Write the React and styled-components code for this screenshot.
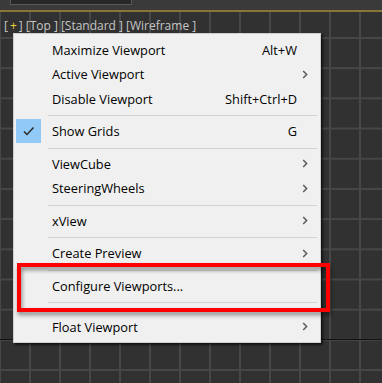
import React from 'react';
import styled, { createGlobalStyle } from 'styled-components';

const Global = createGlobalStyle`
  html, body { margin: 0; padding: 0; width: 382px; height: 383px; overflow: hidden; background: #313131; }
  #root { width: 382px; height: 383px; }
`;

const Screen = styled.div`
  position: relative;
  width: 382px;
  height: 383px;
  display: flex;
  flex-direction: column;
  overflow: hidden;
  background: #313131;
  font-family: "Open Sans", "Noto Sans", sans-serif;
`;

const TopStrip = styled.div`
  height: 10px;
  background: #3a3a3a;
  display: flex;
  align-items: flex-start;
`;

const Field = styled.div`
  margin-left: 10px;
  width: 120px;
  height: 4px;
  background: #272727;
  border: 1px solid #585858;
  border-top: none;
`;

const AccentLine = styled.div`
  height: 2px;
  background: #8a7634;
`;

const Viewport = styled.div`
  flex: 1;
  position: relative;
  padding: 6px 0 0 4px;
  background-color: #313131;
  background-image:
    linear-gradient(#111111, #111111),
    linear-gradient(to right, #474747 2px, transparent 2px),
    linear-gradient(to bottom, #474747 2px, transparent 2px);
  background-size: 100% 1px, 30px 100%, 100% 30.2px;
  background-position: 0 327px, 29px 0, 0 25px;
  background-repeat: no-repeat, repeat, repeat;
`;

const ViewLabel = styled.div`
  display: flex;
  gap: 3px;
  font-size: 12px;
  line-height: 16px;
  color: #c6c6c6;
  white-space: pre;
`;

const Plus = styled.span`
  color: #e8d23a;
  padding: 0 2px;
`;

const Menu = styled.div`
  position: absolute;
  left: 13px;
  top: 33px;
  width: 308px;
  box-sizing: border-box;
  background: #f0f0f0;
  border: 1px solid #cfcfcf;
  box-shadow: 2px 2px 2px rgba(0, 0, 0, 0.6);
  padding: 3.5px 0 3px;
  font-size: 12.8px;
  color: #000;
`;

const Item = styled.div`
  display: grid;
  grid-template-columns: 25px 1fr auto 23px;
  align-items: center;
  height: 24.5px;
  padding-left: 2px;
`;

const IconCell = styled.div`
  width: 25px;
  height: 24px;
  display: flex;
  align-items: center;
  justify-content: center;
  background: ${(p) => (p.$checked ? '#91c9f7' : 'transparent')};
`;

const Label = styled.span`
  padding-left: 11px;
  white-space: nowrap;
`;

const Shortcut = styled.span`
  white-space: nowrap;
`;

const ArrowCell = styled.div`
  display: flex;
  align-items: center;
  padding-left: 5px;
`;

const Separator = styled.div`
  height: ${(p) => (p.$tall ? '16.7px' : '8px')};
  margin: 0 3px 0 34px;
  display: flex;
  flex-direction: column;
  &::before {
    content: '';
    margin-top: 4px;
    height: 1px;
    background: #d4d4d4;
  }
`;

const Callout = styled.div`
  position: absolute;
  left: 17px;
  top: 263px;
  width: 313px;
  height: 49px;
  box-sizing: border-box;
  border: 4px solid #ff0000;
  filter: drop-shadow(1px 3px 2px rgba(0, 0, 0, 0.45));
`;

const Check = () => (
  <svg width="25" height="24" viewBox="0 0 25 24">
    <polyline points="8,12.5 11,15.5 17.5,8.5" fill="none" stroke="#2b2b2b" strokeWidth="1.5" />
  </svg>
);

const Chevron = () => (
  <svg width="6" height="9" viewBox="0 0 6 9">
    <polyline points="1.2,1 4.6,4.5 1.2,8" fill="none" stroke="#5e5e5e" strokeWidth="1.6" />
  </svg>
);

const items = [
  { label: 'Maximize Viewport', shortcut: 'Alt+W' },
  { label: 'Active Viewport', sub: true },
  { label: 'Disable Viewport', shortcut: 'Shift+Ctrl+D' },
  { sep: true },
  { label: 'Show Grids', shortcut: 'G', checked: true },
  { sep: true },
  { label: 'ViewCube', sub: true },
  { label: 'SteeringWheels', sub: true },
  { sep: true },
  { label: 'xView', sub: true },
  { sep: true },
  { label: 'Create Preview', sub: true },
  { sep: true },
  { label: 'Configure Viewports...' },
  { sep: true, tall: true },
  { label: 'Float Viewport', sub: true },
];

export default function App() {
  return (
    <Screen>
      <Global />
      <TopStrip>
        <Field />
      </TopStrip>
      <AccentLine />
      <Viewport>
        <ViewLabel>
          <span>
            [<Plus>+</Plus>]
          </span>
          <span>[Top ]</span>
          <span>[Standard ]</span>
          <span>[Wireframe ]</span>
        </ViewLabel>
      </Viewport>
      <Menu>
        {items.map((it, i) =>
          it.sep ? (
            <Separator key={i} $tall={it.tall} />
          ) : (
            <Item key={i}>
              <IconCell $checked={it.checked}>{it.checked && <Check />}</IconCell>
              <Label>{it.label}</Label>
              <Shortcut>{it.shortcut || ''}</Shortcut>
              <ArrowCell>{it.sub && <Chevron />}</ArrowCell>
            </Item>
          )
        )}
      </Menu>
      <Callout />
    </Screen>
  );
}
